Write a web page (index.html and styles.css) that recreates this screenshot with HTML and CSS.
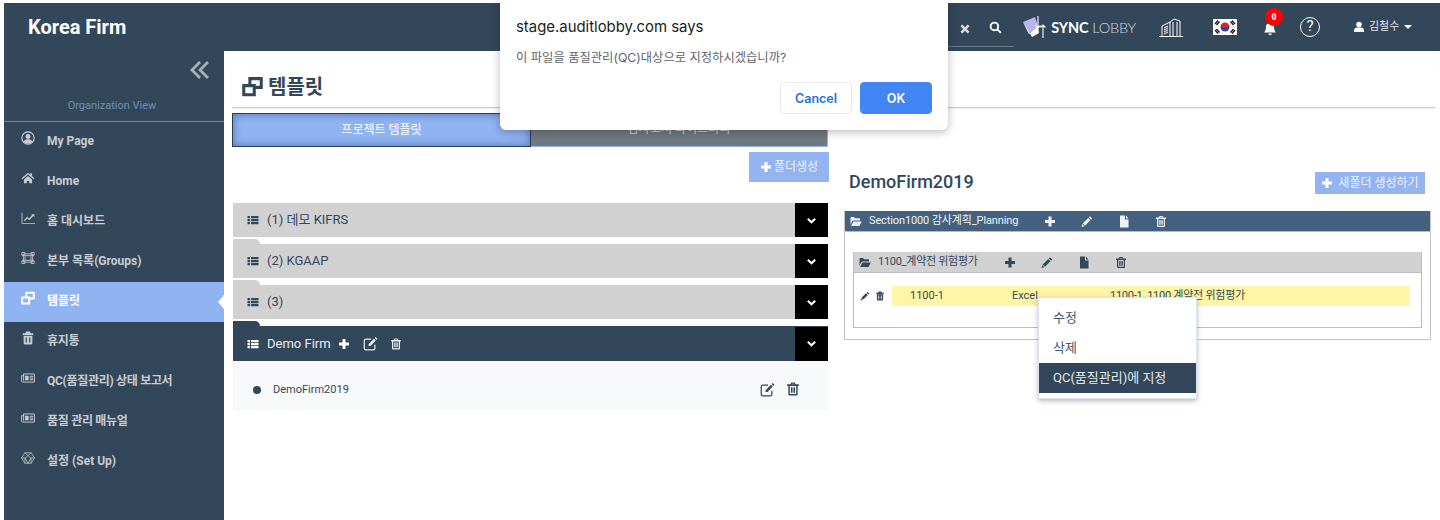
FILE: index.html
```html
<!DOCTYPE html>
<html lang="ko">
<head>
<meta charset="utf-8">
<title>템플릿</title>
<link rel="stylesheet" href="styles.css">
</head>
<body>
<svg class="sprite" xmlns="http://www.w3.org/2000/svg">
  <symbol id="i-plus" viewBox="0 0 24 24"><path d="M9 2h6v7h7v6h-7v7H9v-7H2V9h7z"/></symbol>
  <symbol id="i-trash" viewBox="0 0 24 24"><path fill-rule="evenodd" d="M9 1h6l1.500 3H22v3h-2v14a2 2 0 0 1-2 2H6a2 2 0 0 1-2-2V7H2V4h5.500zM10 3.200 9.600 4h4.800L14 3.200zM6.500 7v13.500h11V7zM8.500 9h1.800v9.500H8.500zM11.100 9h1.800v9.500h-1.800zM13.700 9h1.800v9.500h-1.800z"/></symbol>
  <symbol id="i-trash-solid" viewBox="0 0 24 24"><path fill-rule="evenodd" d="M9 1h6l1.500 3H21v3H3V4h4.500zM4.500 8h15v13a2 2 0 0 1-2 2h-11a2 2 0 0 1-2-2zM8 11v8.500h2V11zM14 11v8.500h2V11z"/></symbol>
  <symbol id="i-pencil" viewBox="0 0 24 24"><path d="M18 1.500 22.500 6l-2.300 2.300-4.500-4.500zM14.300 5.200l4.500 4.500L8 20.500 3.500 16zM2.700 17.200l4.100 4.100L1 23z"/></symbol>
  <symbol id="i-file" viewBox="0 0 24 24"><path d="M4 0h10v8h7v16H4zM16 0l5 6h-5z"/></symbol>
  <symbol id="i-folder" viewBox="0 0 24 24"><path d="M1 5a2 2 0 0 1 2-2h5l2 2.500h8a2 2 0 0 1 2 2V10H7a3 3 0 0 0-2.700 1.700L1 18.500zM7 12h16.500L19 21H2z"/></symbol>
  <symbol id="i-list" viewBox="0 0 24 24"><path d="M1 4h5v4.500H1zM8 4h15v4.500H8zM1 10h5v4.500H1zM8 10h15v4.500H8zM1 16h5v4.500H1zM8 16h15v4.500H8z"/></symbol>
  <symbol id="i-edit" viewBox="0 0 24 24"><path fill="none" stroke="currentColor" stroke-width="2" d="M19 14v5.500a2.500 2.500 0 0 1-2.500 2.500h-12A2.500 2.500 0 0 1 2 19.500v-12A2.500 2.500 0 0 1 4.500 5H13"/><path d="M20.300 1.500l3 3-1.700 1.700-3-3zM17.500 4.300l3 3L12 16H9v-3z"/></symbol>
  <symbol id="i-clone" viewBox="0 0 24 24"><path fill="none" stroke="currentColor" stroke-width="3.500" d="M2 11h12v10.500H2zM9 11V3h13v10h-8"/></symbol>
  <symbol id="i-chev" viewBox="0 0 24 24"><path fill="none" stroke="currentColor" stroke-width="4.500" d="M4 8l8 8 8-8"/></symbol>
  <symbol id="i-user-c" viewBox="0 0 24 24"><circle cx="12" cy="12" r="10.500" fill="none" stroke="currentColor" stroke-width="2"/><circle cx="12" cy="9.500" r="4.200"/><path d="M4.500 18.500c1.500-3.500 4-4.500 7.500-4.500s6 1 7.500 4.500A10 10 0 0 1 12 22a10 10 0 0 1-7.500-3.500z"/></symbol>
  <symbol id="i-home" viewBox="0 0 24 24"><path d="M12 3 1 12.500l1.500 1.700L12 6.200l9.500 8 1.500-1.700-4-3.500V4h-3v2.500zM5 14.500 12 8.500l7 6V21h-5v-4h-4v4H5z"/></symbol>
  <symbol id="i-chart" viewBox="0 0 24 24"><path d="M1 3h1.500v17.500H24V22H1zM5 16l5.500-6 3.500 3 5-6-1.500-1.500H23v5l-1.800-1.800L14.200 16l-3.500-3L6.300 17.500z"/></symbol>
  <symbol id="i-group" viewBox="0 0 24 24"><path fill="none" stroke="currentColor" stroke-width="1.500" d="M4 5h16v14H4zM7 8h10v8H7zM1.500 2.500h5v5h-5zM17.500 2.500h5v5h-5zM1.500 16.500h5v5h-5zM17.500 16.500h5v5h-5z"/></symbol>
  <symbol id="i-news" viewBox="0 0 24 24"><path fill="none" stroke="currentColor" stroke-width="1.600" d="M4.500 5H23v14H3a2 2 0 0 1-2-2V8h3.500zM4.500 5v12"/><path d="M7 8h6v8H7zM15 8h6v2h-6zM15 11h6v2h-6zM15 14h6v2h-6z"/></symbol>
  <symbol id="i-hex" viewBox="0 0 24 24"><path fill="none" stroke="currentColor" stroke-width="1.300" d="M6.500 3h11L23 12l-5.500 9h-11L1 12zM6.500 3 12 8l5.500-5M1 12h6l5-4 5 4h6M7 12l5 9 5-9M7 12l-.5 9M17 12l.5 9"/></symbol>
  <symbol id="i-x" viewBox="0 0 24 24"><path d="M6.500 3 12 8.500 17.500 3 21 6.500 15.500 12l5.500 5.500-3.500 3.500-5.500-5.500L6.500 21 3 17.500 8.500 12 3 6.500z"/></symbol>
  <symbol id="i-search" viewBox="0 0 24 24"><path fill="none" stroke="currentColor" stroke-width="3.500" d="M10 3a7 7 0 1 0 0 14 7 7 0 0 0 0-14zM15 15l7 7"/></symbol>
  <symbol id="i-bell" viewBox="0 0 24 24"><path d="M12 2a7 7 0 0 1 7 7c0 5 1.500 7 3 9H2c1.500-2 3-4 3-9a7 7 0 0 1 7-7zM9 19.500h6a3 3 0 0 1-6 0z"/></symbol>
  <symbol id="i-user" viewBox="0 0 24 24"><circle cx="12" cy="7" r="5.500"/><path d="M2 22v-3c0-4 3-6 6-6h8c3 0 6 2 6 6v3z"/></symbol>
</svg>

<div class="app">
  <header class="topbar">
    <div class="brand">Korea Firm</div>
    <div class="tools">
      <div class="searchbox">
        <svg class="ic ic-x"><use href="#i-x"/></svg>
        <svg class="ic ic-search"><use href="#i-search"/></svg>
      </div>
      <div class="logo">
        <svg class="logo-mark" viewBox="0 0 26 22">
          <path fill="#b9b4ec" d="M1 6 13 1l3 9-9 8z"/>
          <path fill="#fff" d="M1 6l6 12 9-8 1 7-7 4z"/>
          <path fill="none" stroke="#fff" stroke-width="1.100" d="M16 0v12M13.500 9.500 16 12l2.500-2.500M21 22V9M18.500 11.500 21 9l2.500 2.500"/>
        </svg>
        <span class="logo-text"><b>SYNC</b> LOBBY</span>
      </div>
      <svg class="building" viewBox="0 0 24 20">
        <path fill="none" stroke="#fff" stroke-width="1" d="M3 19V9l8-4v14M11 5l4-3 6 2v15M0 19.500h24M5 11l4-2M5 13l4-2M5 15l4-2M5 17l4-2M14 5v14M18 5v14"/>
      </svg>
      <svg class="flag" viewBox="0 0 24 16">
        <rect width="24" height="16" fill="#fff"/>
        <path fill="#d9232e" d="M7.500 8a4.500 4.500 0 0 1 9 0z"/>
        <path fill="#2a4a9c" d="M7.500 8a4.500 4.500 0 0 0 9 0z"/>
        <path stroke="#222" stroke-width="1.400" d="M2 5l3-3.500M3.500 6l3-3.500M17.500 2.500l3 3.500M19 1.500l3 3.500M2 11l3 3.500M3.500 10l3 3.500M17.500 13.500l3-3.500M19 14.500l3-3.500"/>
      </svg>
      <div class="bell">
        <svg class="ic ic-bell"><use href="#i-bell"/></svg>
        <span class="badge">0</span>
      </div>
      <div class="help">?</div>
      <div class="account">
        <svg class="ic ic-user"><use href="#i-user"/></svg>
        <span>김철수</span>
        <i class="caret"></i>
      </div>
    </div>
  </header>

  <div class="body">
    <aside class="sidebar">
      <div class="collapse">
        <svg viewBox="0 0 20 18"><path fill="none" stroke="currentColor" stroke-width="2.800" d="M10 1 2 9l8 8M18 1l-8 8 8 8"/></svg>
      </div>
      <div class="org">Organization View</div>
      <nav class="nav">
        <a class="nav-item"><svg class="ic"><use href="#i-user-c"/></svg><span>My Page</span></a>
        <a class="nav-item"><svg class="ic"><use href="#i-home"/></svg><span>Home</span></a>
        <a class="nav-item"><svg class="ic"><use href="#i-chart"/></svg><span>홈 대시보드</span></a>
        <a class="nav-item"><svg class="ic"><use href="#i-group"/></svg><span>본부 목록(Groups)</span></a>
        <a class="nav-item is-active"><svg class="ic"><use href="#i-clone"/></svg><span>템플릿</span></a>
        <a class="nav-item tight"><svg class="ic"><use href="#i-trash-solid"/></svg><span>휴지통</span></a>
        <a class="nav-item tight"><svg class="ic"><use href="#i-news"/></svg><span>QC(품질관리) 상태 보고서</span></a>
        <a class="nav-item tight"><svg class="ic"><use href="#i-news"/></svg><span>품질 관리 매뉴얼</span></a>
        <a class="nav-item"><svg class="ic"><use href="#i-hex"/></svg><span>설정 (Set Up)</span></a>
      </nav>
    </aside>

    <main class="content">
      <h1 class="page-title"><svg class="ic"><use href="#i-clone"/></svg>템플릿</h1>
      <div class="columns">
        <section class="col-left">
          <div class="tabs">
            <div class="tab tab-on">프로젝트 템플릿</div>
            <div class="tab tab-off">감사조서 라이브러리</div>
          </div>
          <div class="left-actions">
            <button class="btn-light btn-folder"><svg class="ic"><use href="#i-plus"/></svg>폴더생성</button>
          </div>
          <div class="accordion">
            <div class="acc-row acc-first"><svg class="ic"><use href="#i-list"/></svg><span>(1) 데모 KIFRS</span><div class="chev"><svg class="ic"><use href="#i-chev"/></svg></div></div>
            <div class="acc-row"><svg class="ic"><use href="#i-list"/></svg><span>(2) KGAAP</span><div class="chev"><svg class="ic"><use href="#i-chev"/></svg></div></div>
            <div class="acc-row"><svg class="ic"><use href="#i-list"/></svg><span>(3)</span><div class="chev"><svg class="ic"><use href="#i-chev"/></svg></div></div>
            <div class="acc-row acc-open">
              <svg class="ic"><use href="#i-list"/></svg><span>Demo Firm</span>
              <svg class="ic act act-plus"><use href="#i-plus"/></svg>
              <svg class="ic act act-edit"><use href="#i-edit"/></svg>
              <svg class="ic act act-trash"><use href="#i-trash"/></svg>
              <div class="chev"><svg class="ic"><use href="#i-chev"/></svg></div>
            </div>
            <div class="acc-body">
              <i class="dot"></i><span class="acc-name">DemoFirm2019</span>
              <svg class="ic body-edit"><use href="#i-edit"/></svg>
              <svg class="ic body-trash"><use href="#i-trash"/></svg>
            </div>
          </div>
        </section>

        <section class="col-right">
          <div class="right-head">
            <h2>DemoFirm2019</h2>
            <button class="btn-light btn-new"><svg class="ic"><use href="#i-plus"/></svg>새폴더 생성하기</button>
          </div>
          <div class="panel">
            <div class="panel-head">
              <svg class="ic ic-folder"><use href="#i-folder"/></svg>
              <span class="name">Section1000 감사계획_Planning</span>
              <svg class="ic"><use href="#i-plus"/></svg>
              <svg class="ic"><use href="#i-pencil"/></svg>
              <svg class="ic"><use href="#i-file"/></svg>
              <svg class="ic"><use href="#i-trash"/></svg>
            </div>
            <div class="panel-inner">
              <div class="panel-head head-gray">
                <svg class="ic ic-folder"><use href="#i-folder"/></svg>
                <span class="name">1100_계약전 위험평가</span>
                <svg class="ic"><use href="#i-plus"/></svg>
                <svg class="ic"><use href="#i-pencil"/></svg>
                <svg class="ic"><use href="#i-file"/></svg>
                <svg class="ic"><use href="#i-trash"/></svg>
              </div>
              <div class="file-row">
                <svg class="ic"><use href="#i-pencil"/></svg>
                <svg class="ic"><use href="#i-trash-solid"/></svg>
                <div class="file-cells">
                  <span class="c1">1100-1</span>
                  <span class="c2">Excel</span>
                  <span class="c3">1100-1_1100 계약전 위험평가</span>
                </div>
              </div>
              <ul class="menu">
                <li>수정</li>
                <li>삭제</li>
                <li class="selected">QC(품질관리)에 지정</li>
              </ul>
            </div>
          </div>
        </section>
      </div>
    </main>
  </div>
</div>

<div class="dialog">
  <div class="dlg-title">stage.auditlobby.com says</div>
  <div class="dlg-msg">이 파일을 품질관리(QC)대상으로 지정하시겠습니까?</div>
  <div class="dlg-actions">
    <button class="dlg-btn dlg-cancel">Cancel</button>
    <button class="dlg-btn dlg-ok">OK</button>
  </div>
</div>
</body>
</html>
```
FILE: styles.css
```css
* { box-sizing: border-box; }
html, body { margin: 0; padding: 0; height: 520px; overflow: hidden; background: #fff; }
body { font-family: Roboto, "Noto Sans CJK KR", sans-serif; color: #33475b; position: relative; }
.sprite { display: none; }
.ic { width: 12px; height: 12px; fill: currentColor; flex: none; display: block; }
button { font-family: inherit; cursor: pointer; }

.app { margin: 3px 0 0 4px; height: 517px; display: flex; flex-direction: column; }

.topbar { height: 48px; background: #33475b; color: #fff; display: flex; align-items: center; flex: none; padding-left: 24px; }
.brand { font-size: 20px; font-weight: 700; line-height: 48px; }
.tools { margin-left: auto; display: flex; align-items: center; height: 48px; }

.searchbox { width: 68px; height: 39px; margin-top: 1px; border-bottom: 1px solid #6a7b8c; display: flex; align-items: center; padding-left: 13px; margin-right: 8px; }
.searchbox .ic-x { width: 12px; height: 12px; color: #d9dde1; margin-top: 3px; }
.searchbox .ic-search { width: 13px; height: 13px; margin-left: 18px; margin-top: 1px; }

.logo { display: flex; align-items: center; }
.logo-mark { width: 26px; height: 22px; display: block; }
.logo-text { font-family: Lato, sans-serif; font-size: 14.500px; font-weight: 300; letter-spacing: -.2px; margin-left: 3px; color: #d5dbe1; white-space: nowrap; }
.logo-text b { font-weight: 700; color: #fff; }

.building { width: 24px; height: 20px; margin-left: 23px; display: block; }
.flag { width: 24px; height: 16px; margin-left: 30px; display: block; }

.bell { position: relative; margin-left: 26px; width: 14px; height: 14px; }
.bell .ic-bell { width: 14px; height: 14px; margin-top: 2px; }
.badge { position: absolute; left: 2px; top: -12px; width: 18px; height: 18px; border-radius: 50%; background: #f00; color: #fff; font: 700 10px/18px "Liberation Serif", serif; text-align: center; }

.help { width: 20px; height: 20px; margin-left: 23px; border: 1.500px solid #fff; border-radius: 50%; font-size: 15px; line-height: 17px; text-align: center; }

.account { display: flex; align-items: center; margin-left: 33px; width: 87px; font-size: 11px; line-height: 14px; color: #e2e5e9; }
.account .ic-user { width: 12px; height: 12px; color: #fff; margin-right: 4px; }
.caret { width: 0; height: 0; border-left: 4px solid transparent; border-right: 4px solid transparent; border-top: 4px solid #fff; margin-left: 5px; }

.body { display: flex; flex: 1; min-height: 0; }

.sidebar { width: 220px; flex: none; background: #33475b; color: #c9ccd0; }
.collapse { height: 38px; display: flex; justify-content: flex-end; padding: 10px 14px 0 0; color: #a9b0b8; }
.collapse svg { width: 20px; height: 18px; display: block; }
.org { height: 33px; border-bottom: 1px solid #6c8bab; text-align: center; padding: 1px 4px 0 0; font-size: 11px; line-height: 32px; color: #7090b0; }
.nav { display: flex; flex-direction: column; }
.nav-item { position: relative; height: 40px; display: flex; align-items: center; font-size: 12px; line-height: 16px; font-weight: 700; white-space: nowrap; padding-left: 17px; }
.nav-item span { margin-top: -2px; }
.nav-item.tight { letter-spacing: -.3px; }
.nav-item .ic { width: 14px; height: 14px; margin-top: -8px; margin-right: 12px; }
.nav-item.is-active { background: #90b3f2; color: #fff; }
.nav-item.is-active::after { content: ""; position: absolute; right: 0; top: 13px; border-top: 7px solid transparent; border-bottom: 7px solid transparent; border-right: 6px solid #fff; }

.content { flex: 1; min-width: 0; padding: 0 5px 0 8px; }
.page-title { margin: 0; height: 57px; padding: 23px 0 0 10px; border-bottom: 1px solid #ccc; box-shadow: 0 1px 1px rgba(0,0,0,.06); font-size: 20px; font-weight: 700; line-height: 26px; color: #33475b; display: flex; align-items: flex-start; }
.page-title .ic { width: 21px; height: 21px; margin: 2px 5px 0 0; }

.columns { display: flex; }
.col-left { width: 596px; flex: none; margin-top: 5px; }
.tabs { display: flex; height: 34px; }
.tab { font-size: 12px; color: #fff; text-align: center; line-height: 32px; }
.tab-on { width: 299px; background: #90b3f2; border: 1px solid #2c3e50; box-shadow: inset 0 0 9px rgba(30,60,120,.55); }
.tab-off { flex: 1; background: #707880; color: #d5d8dc; border-bottom: 1px solid #90b3f2; border-right: 1px solid #90b3f2; }

.btn-light { border: 0; background: #93b4f0; color: #eef3fc; display: flex; align-items: center; justify-content: center; padding: 0; line-height: 16px; }
.left-actions { display: flex; justify-content: flex-end; margin: 5px -1px 21px 0; }
.btn-folder { width: 80px; height: 30px; font-size: 12px; }
.btn-folder .ic { width: 12px; height: 12px; color: #fff; margin-right: 2px; }

.accordion { padding-left: 1px; }
.acc-row { position: relative; height: 34px; margin-bottom: 7px; background: #d1d1d1; display: flex; align-items: center; padding-left: 14px; font-size: 13px; line-height: 16px; color: #33475b; }
.acc-row::before { content: ""; position: absolute; left: 0; top: -5px; width: 27px; height: 5px; background: inherit; border-top-right-radius: 8px; }
.acc-first::before { display: none; }
.acc-row > .ic:first-child { width: 12px; height: 12px; margin-right: 8px; }
.chev { margin-left: auto; width: 33px; height: 34px; background: #000; color: #fff; display: flex; align-items: center; justify-content: center; }
.chev .ic { width: 11px; height: 11px; }

.acc-open { height: 35px; margin: 0; background: #33475b; color: #e8ebee; }
.acc-open > .ic:first-child { color: #fff; }
.act { color: #fff; }
.act-plus { margin-left: 7px; }
.act-edit { margin-left: 13px; width: 15px; height: 15px; color: #e8ebee; }
.act-trash { margin-left: 12px; color: #e8ebee; }

.acc-body { height: 50px; background: #f8f9fb; display: flex; align-items: center; padding: 6px 0 0 20px; font-size: 11px; line-height: 14px; color: #33475b; }
.acc-name { margin-top: 2px; }
.dot { width: 8px; height: 8px; border-radius: 50%; background: #33475b; margin-right: 12px; margin-top: 1px; }
.body-edit { width: 15px; height: 15px; margin-left: 411px; }
.body-trash { width: 14px; height: 14px; margin-left: 11px; }

.col-right { width: 587px; flex: none; margin-left: 16px; margin-top: 0; }
.right-head { height: 22px; margin: 64px 0 17px; padding: 0 6px 0 5px; display: flex; align-items: center; justify-content: space-between; }
.right-head h2 { margin: 0 0 2px; font-size: 18px; font-weight: 500; color: #33475b; line-height: 22px; }
.btn-new { width: 110px; height: 22px; font-size: 12px; }
.btn-new .ic { width: 12px; height: 12px; color: #fff; margin-right: 5px; }

.panel { height: 129px; border: 1px solid #c4c4c4; padding: 0 8px; }
.panel-head { display: flex; align-items: center; height: 21px; margin: -1px -8px 0; padding-left: 5px; background: #456180; border-bottom: 1px solid #b8bcc2; color: #f0f3f6; font-size: 11px; line-height: 14px; white-space: nowrap; }
.panel-head .ic { width: 12px; height: 13px; margin-right: 25px; }
.panel-head .ic-folder { width: 12px; margin-right: 7px; }
.panel-head .name { margin-right: 26px; letter-spacing: -.12px; }
.panel-inner { position: relative; height: 76px; margin-top: 20px; border: 1px solid #bdbdbd; }
.head-gray { margin: -1px 0 0; background: #d1d1d1; color: #33475b; border-bottom: 1px solid #bdbdbd; }
.head-gray .name { margin-right: 26px; letter-spacing: -.28px; }
.file-row { display: flex; align-items: center; height: 20px; margin-top: 13px; padding-left: 6px; }
.file-row .ic { width: 10px; height: 10px; margin-right: 5px; }
.file-row .ic + .ic { margin-right: 7px; }
.file-cells { width: 518px; height: 20px; background: #fff5a6; display: flex; align-items: center; padding-left: 18px; font-size: 11px; line-height: 14px; color: #33475b; white-space: nowrap; }
.c1 { width: 102px; }
.c2 { width: 98px; }
.c3 { letter-spacing: -.25px; }

.menu { position: absolute; left: 184px; top: 44px; width: 159px; height: 102px; margin: 0; padding: 5px 0 0; list-style: none; background: #fff; border: 1px solid #dde3ea; box-shadow: 0 2px 5px rgba(40,60,90,.35); font-size: 13px; color: #44586c; }
.menu li { height: 30px; line-height: 30px; padding-left: 14px; }
.menu .selected { background: #33475b; color: #e6eaee; }

.dialog { position: absolute; left: 500px; top: 0; width: 448px; height: 130px; background: #fff; border-radius: 0 0 6px 6px; box-shadow: 0 2px 10px rgba(0,0,0,.28); padding: 18px 16px 0; font-family: Inter, "Noto Sans CJK KR", sans-serif; }
.dlg-title { font-size: 14.900px; line-height: 18px; color: #202124; }
.dlg-msg { margin-top: 13px; font-size: 12.300px; line-height: 18px; color: #5f6368; }
.dlg-actions { display: flex; justify-content: flex-end; gap: 8px; margin-top: 15px; }
.dlg-btn { width: 72px; height: 32px; border-radius: 4px; font-size: 12.500px; font-weight: 600; font-family: Inter, sans-serif; padding: 0; }
.dlg-cancel { background: #fff; border: 1px solid #e6e8ea; color: #1a73e8; }
.dlg-ok { background: #4285f4; border: 1px solid #4285f4; color: #fff; }
```
